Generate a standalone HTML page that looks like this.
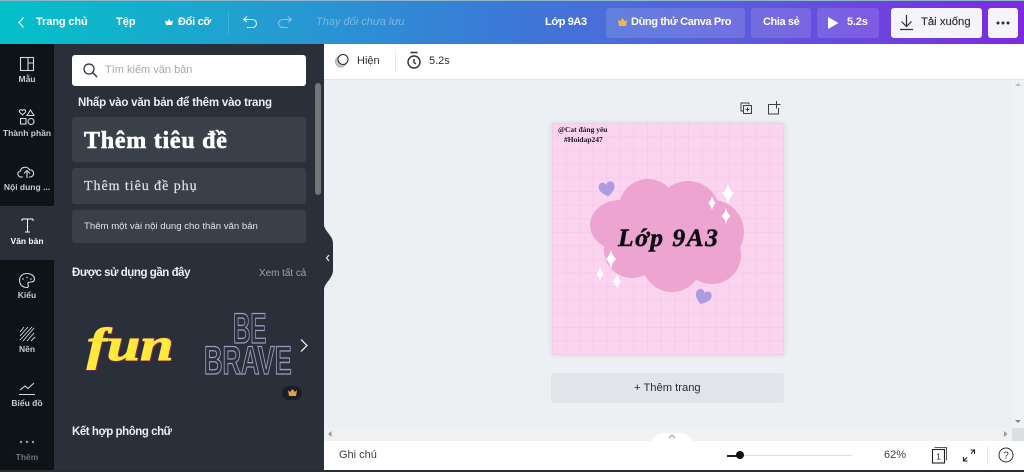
<!DOCTYPE html>
<html lang="vi"><head><meta charset="utf-8"><title>Canva</title>
<style>
*{box-sizing:border-box}
html,body{margin:0;padding:0;width:1024px;height:472px;overflow:hidden;background:#edf0f2;font-family:"Liberation Sans","Noto Sans CJK SC",sans-serif}
.a,.t{position:absolute}
.t{white-space:nowrap;line-height:14px}
svg{position:absolute;overflow:visible}
.w{color:#fff;font-weight:700;font-size:11px}
.s{font-size:8.5px;font-weight:700;color:#c9ccd0;text-align:center;width:54px;left:0;line-height:10px}
.btn{position:absolute;top:8px;height:30px;background:rgba(255,255,255,.13);border-radius:3px}
.ic{fill:none;stroke:#d5d8dc;stroke-width:1.1}
</style></head><body>
<div class="a" style="left:0;top:1px;width:1024px;height:43px;background:linear-gradient(90deg,#03c1c8 0%,#1fa3d0 22%,#3c78d8 50%,#5a5fdc 70%,#7d2ae0 100%)"></div>
<div class="a" style="left:0;top:0;width:1024px;height:1px;background:#8fb7c9"></div>
<svg style="left:0;top:0" width="300" height="44" fill="none" stroke="#fff">
<path d="M23.500 17.500l-4.500 5 4.500 5" stroke-width="1.200"/>
<path d="M247 16.500l-3.500 3 3.500 2.500M244 19.500h8c6 0 6 8 0 8h-5" stroke="#e5f3f8" stroke-width="1.100"/>
<path d="M288 16.500l3.500 3-3.500 2.500M291 19.500h-8c-6 0-6 8 0 8h5" stroke="#8fc0e6" stroke-width="1.100"/>
<path d="M165 20l2 2 2-3 2 3 2-2-1 5h-6z" fill="#fff" stroke="none"/>
<path d="M228.500 10v26" stroke="rgba(255,255,255,.14)"/>
</svg>
<div class="t w" style="left:36px;top:15px;letter-spacing:-.1px">Trang chủ</div>
<div class="t w" style="left:116px;top:15px">Tệp</div>
<div class="t w" style="left:178px;top:15px;letter-spacing:-.3px">Đổi cỡ</div>
<div class="t" style="left:316px;top:15px;font-size:11px;font-style:italic;color:#7eb6dc">Thay đổi chưa lưu</div>
<div class="t w" style="left:545px;top:15px;letter-spacing:-.4px">Lớp 9A3</div>
<div class="btn" style="left:606px;width:139px"></div>
<svg style="left:618px;top:18px" width="9" height="9"><path d="M0 1.500l2.200 2 2.300-3.500 2.300 3.500 2.200-2-1 6.500h-7z" fill="#f5b83d"/></svg>
<div class="t w" style="left:631px;top:15px;letter-spacing:-.38px">Dùng thử Canva Pro</div>
<div class="btn" style="left:751px;width:60px"></div>
<div class="t w" style="left:763px;top:15px;letter-spacing:-.4px">Chia sẻ</div>
<div class="btn" style="left:817px;width:62px"></div>
<svg style="left:827px;top:16px" width="12" height="14"><path d="M1 1l10.500 6L1 13z" fill="#fff"/></svg>
<div class="t w" style="left:847px;top:15px;letter-spacing:-.2px">5.2s</div>
<div class="a" style="left:891px;top:8px;width:91px;height:30px;background:#f6f4fb;border-radius:3px"></div>
<svg style="left:899px;top:15px" width="16" height="16" fill="none" stroke="#2b3038" stroke-width="1.200"><path d="M7.500 0v11M2.500 6.500l5 5 5-5M1 14.500h13"/></svg>
<div class="t" style="left:921px;top:15px;font-size:11.300px;color:#2b3038;-webkit-text-stroke:.15px #2b3038">Tải xuống</div>
<div class="a" style="left:988px;top:8px;width:30px;height:30px;background:#f6f4fb;border-radius:3px"></div>
<svg style="left:996px;top:21px" width="16" height="4" fill="#2b3038"><circle cx="2" cy="2" r="1.500"/><circle cx="7" cy="2" r="1.500"/><circle cx="12" cy="2" r="1.500"/></svg>

<div class="a" style="left:0;top:44px;width:54px;height:428px;background:#0e1318"></div>
<div class="a" style="left:54px;top:44px;width:270px;height:428px;background:#293039"></div>
<div class="a" style="left:0;top:206px;width:54px;height:54px;background:#293039"></div>
<div class="a" style="left:0;top:196px;width:54px;height:10px;background:#0e1318;border-radius:0 0 6px 0"></div>
<div class="a" style="left:0;top:260px;width:54px;height:10px;background:#0e1318;border-radius:0 6px 0 0"></div>

<svg style="left:0;top:44px" width="54" height="428" class="ic">
<rect x="20.500" y="13.500" width="13" height="13"/><path d="M28 13.500v13M28 19h5.500"/>
<path d="M20 68.500c-2-2 1-4 2.500-2 1.500-2 4.500 0 2.500 2l-2.500 2.500zM30.500 66l3.500 5.500h-7z"/><rect x="20.500" y="74.500" width="5.500" height="5.500"/><circle cx="31" cy="77.500" r="3"/>
<path d="M23 133h-2c-3.500 0-4.500-5-.5-6 .5-4.500 7-5 9-1.200 4.500-.4 6 6 1 7.200h-1.500M27 134v-7M24 129.500l3-3 3 3"/>
<path d="M27 229.500c-5 0-7.500 3-7.500 7s3.500 7 7 7c2.500 0 2-2 1.500-3-.5-2 1-2.500 3-2.500s3.500-1 3.500-3c0-3-3.500-5.500-7.500-5.500z"/>
<g stroke-width=".9"><path d="M20 288l4-5M20 292l8-9M20 296l12-13M23 297l11-13M27 297l7-8M31 297l4-4"/></g>
<path d="M20 346l5-4 3 2.500 6-5.500M19 350.500h16"/>
</svg>
<svg style="left:0;top:0" width="54" height="472">
<path d="M22 219h11M27.500 219v13M22 219v2M33 219v2M25 232h5" stroke="#fff" stroke-width="1" fill="none"/>
<g fill="#9a9ea3"><circle cx="21" cy="442" r="1.200"/><circle cx="27" cy="442" r="1.200"/><circle cx="33" cy="442" r="1.200"/></g>
<g fill="#d5d8dc"><circle cx="23" cy="279" r=".8"/><circle cx="27" cy="277.500" r=".8"/><circle cx="31" cy="279" r=".8"/></g>
</svg>
<div class="t s" style="top:74px">Mẫu</div>
<div class="t s" style="top:128px">Thành phần</div>
<div class="t s" style="top:182px">Nội dung ...</div>
<div class="t s" style="top:236px;color:#fff">Văn bản</div>
<div class="t s" style="top:290px">Kiểu</div>
<div class="t s" style="top:344px">Nền</div>
<div class="t s" style="top:398px">Biểu đồ</div>
<div class="t s" style="top:452px;color:#6e7277">Thêm</div>

<div class="a" style="left:72px;top:55px;width:234px;height:31px;background:#fff;border-radius:3px"></div>
<svg style="left:83px;top:63px" width="15" height="15" fill="none" stroke="#2b3038" stroke-width="1.300"><circle cx="6" cy="6" r="5"/><path d="M9.500 9.500l4.500 4.500"/></svg>
<div class="t" style="left:105px;top:63px;font-size:11px;color:#a5a9ae">Tìm kiếm văn bản</div>
<div class="t" style="left:78px;top:96px;font-size:11.500px;font-weight:700;color:#eceef0;letter-spacing:-.2px">Nhấp vào văn bản để thêm vào trang</div>
<div class="a" style="left:315px;top:83px;width:6px;height:112px;background:#70757a;border-radius:3px"></div>
<div class="a" style="left:72px;top:117px;width:234px;height:45px;background:#3a4049;border-radius:3px"></div>
<div class="t" style="left:84px;top:129px;font-family:'Liberation Serif','Noto Serif CJK SC',serif;font-size:24px;font-weight:700;color:#fff;line-height:24px;-webkit-text-stroke:.6px #fff;letter-spacing:.75px">Thêm tiêu đề</div>
<div class="a" style="left:72px;top:168px;width:234px;height:36px;background:#3a4049;border-radius:3px"></div>
<div class="t" style="left:84px;top:179px;font-family:'Liberation Serif','Noto Serif CJK SC',serif;font-size:14px;color:#dfe1e3;line-height:16px;letter-spacing:.95px;-webkit-text-stroke:.2px #dfe1e3">Thêm tiêu đề phụ</div>
<div class="a" style="left:72px;top:210px;width:234px;height:33px;background:#3a4049;border-radius:3px"></div>
<div class="t" style="left:84px;top:220px;font-size:9.600px;color:#e2e4e6">Thêm một vài nội dung cho thân văn bản</div>
<div class="t" style="left:72px;top:266px;font-size:11.500px;font-weight:700;color:#eceef0;letter-spacing:-.45px">Được sử dụng gần đây</div>
<div class="t" style="left:259px;top:267px;font-size:10px;color:#9ea2a7;letter-spacing:-.05px">Xem tất cả</div>
<div class="t" style="left:87px;top:322px;font-family:'Liberation Serif',serif;font-size:46px;font-weight:700;font-style:italic;color:#ffe93d;line-height:46px;transform:scaleX(1.3);transform-origin:0 0;-webkit-text-stroke:1px #ffe93d;text-shadow:1.200px 1.200px 0 #8c2a55,-.8px 0 0 #8c2a55,0 -1px 0 #8c2a55,1px -1px 0 #8c2a55,-.8px 1px 0 #8c2a55">fun</div>
<div class="t" style="left:233px;top:308px;font-weight:700;font-size:43px;line-height:43px;color:#293039;-webkit-text-stroke:1.300px #9a9cc0;transform:scaleX(.56);transform-origin:0 0">BE</div>
<div class="t" style="left:204px;top:341px;font-weight:700;font-size:40px;line-height:40px;color:#293039;-webkit-text-stroke:1.300px #9a9cc0;transform:scaleX(.64);transform-origin:0 0">BRAVE</div>
<svg style="left:299px;top:338px" width="10" height="15" fill="none" stroke="#e8e9ea" stroke-width="1.300"><path d="M2 1.500l6 6-6 6"/></svg>
<div class="a" style="left:282px;top:386px;width:20px;height:14px;background:#1a1f26;border-radius:7px"></div>
<svg style="left:288px;top:389px" width="9" height="8"><path d="M0 1l2 2L4.500 0 7 3l2-2-1 6H1z" fill="#e2a24b"/></svg>
<div class="t" style="left:72px;top:425px;font-size:11.500px;font-weight:700;color:#eceef0;letter-spacing:-.45px">Kết hợp phông chữ</div>

<div class="a" style="left:324px;top:44px;width:700px;height:36px;background:#fff;border-bottom:1px solid #e3e6e8"></div>
<svg style="left:334px;top:52px" width="18" height="18" fill="none"><circle cx="7" cy="9.500" r="5.500" fill="#c8cbce" stroke="#a9adb1"/><circle cx="9" cy="7.500" r="5" fill="#fff" stroke="#2b3038" stroke-width="1.100"/></svg>
<div class="t" style="left:357px;top:54px;font-size:11px;color:#2b3038">Hiện</div>
<div class="a" style="left:395px;top:51px;width:1px;height:21px;background:#e6e8ea"></div>
<svg style="left:406px;top:51px" width="16" height="19" fill="none" stroke="#2b3038" stroke-width="1.400"><circle cx="8" cy="11" r="6"/><path d="M4.500 1.500h7M8 8v3.500l2 1.500"/></svg>
<div class="t" style="left:429px;top:54px;font-size:11px;color:#2b3038">5.2s</div>

<div class="a" style="left:1012px;top:80px;width:12px;height:350px;background:#eff1f2"></div>
<svg style="left:1014px;top:82px" width="8" height="6"><path d="M1 4l3-3 3 3z" fill="#b9bcbe"/></svg>
<svg style="left:1014px;top:419px" width="8" height="6"><path d="M1 1l3 3 3-3z" fill="#85888b"/></svg>
<div class="a" style="left:324px;top:428px;width:700px;height:13px;background:#eff1f2"></div>
<svg style="left:327px;top:430px" width="6" height="8"><path d="M4.500 1L1 4l3.500 3z" fill="#9a9da0"/></svg>
<svg style="left:1003px;top:430px" width="6" height="8"><path d="M1 1l3.500 3L1 7z" fill="#9a9da0"/></svg>
<div class="a" style="left:1012px;top:428px;width:12px;height:13px;background:#dcdfe1"></div>

<svg style="left:740px;top:101px" width="42" height="16" fill="none" stroke="#3b4046" stroke-width="1"><path d="M3 10H1V2h8v1.500"/><rect x="3.500" y="4.500" width="8" height="8"/><path d="M7.500 6.500v4M5.500 8.500h4"/><path d="M35 3.500h-6.500v9.500h10V7M36.500 0v7.500M33 3.500h7.500"/></svg>

<div class="a" style="left:552px;top:123px;width:232px;height:232px;background-color:#fbd4ef;background-image:linear-gradient(rgba(232,170,222,.2) 1px,transparent 1px),linear-gradient(90deg,rgba(232,170,222,.2) 1px,transparent 1px);background-size:13.600px 13.600px;box-shadow:0 0 5px rgba(60,60,80,.12)"></div>
<div class="t" style="left:558px;top:125px;font-family:'Liberation Serif','Noto Serif CJK SC',serif;font-size:7.500px;font-weight:700;line-height:10px;color:#1b1524">@Cat đáng yêu<br><span style="margin-left:6px">#Hoidap247</span></div>
<svg style="left:0;top:0" width="1024" height="472">
<g fill="#eea4d0">
<circle cx="648" cy="208" r="29"/><circle cx="688" cy="213" r="32"/>
<ellipse cx="620" cy="225" rx="30" ry="25"/><circle cx="712" cy="232" r="32"/>
<circle cx="632" cy="250" r="28"/><circle cx="672" cy="262" r="30"/><circle cx="712" cy="255" r="29"/>
<rect x="625" y="210" width="90" height="55"/>
</g>
<path fill="#ae9ce0" transform="translate(607 189) rotate(-10)" d="M0 7.500C-3 5.500-8 2-8-2c0-3 2-5 4.200-5C-2-7-.8-6 0-4.500.8-6 2-7 4.200-7 6.500-7 8-5 8-2c0 4-5 7.500-8 9.500z"/>
<path fill="#ae9ce0" transform="translate(703 297) rotate(20)" d="M0 7.500C-3 5.500-8 2-8-2c0-3 2-5 4.200-5C-2-7-.8-6 0-4.500.8-6 2-7 4.200-7 6.500-7 8-5 8-2c0 4-5 7.500-8 9.500z"/>
<g fill="#fff">
<path d="M728 184q1.500 6 6 9.500q-4.500 3.500-6 10q-1.500-6.500-6-10q4.500-3.500 6-9.500z"/>
<path d="M712 196q1 4 3.500 7q-2.500 3-3.500 7q-1-4-3.500-7q2.500-3 3.500-7z"/>
<path d="M726 208q1 5 4.500 8q-3.500 3-4.500 8q-1-5-4.500-8q3.500-3 4.500-8z"/>
<path d="M611 250q1 5 5 9q-4 4-5 10q-1-6-5-10q4-4 5-9z"/>
<path d="M600 267q1 4 3.500 7q-2.500 3-3.500 7q-1-4-3.500-7q2.500-3 3.500-7z"/>
<path d="M617 274q1 4 4 7.500q-3 3.500-4 7.500q-1-4-4-7.500q3-3.500 4-7.500z"/>
</g>
</svg>
<div class="t" style="left:618px;top:224px;font-family:'Liberation Serif','Noto Serif CJK SC',serif;font-size:25.500px;font-weight:700;font-style:italic;line-height:28px;color:#0d0a12;letter-spacing:1.500px;-webkit-text-stroke:.5px #0d0a12">Lớp 9A3</div>

<div class="a" style="left:551px;top:373px;width:233px;height:30px;background:#e1e4e8;border-radius:3px"></div>
<div class="t" style="left:634px;top:381px;font-size:11.200px;color:#2b3038">+ Thêm trang</div>

<div class="a" style="left:324px;top:441px;width:700px;height:29px;background:#fff"></div>
<div class="a" style="left:0;top:470px;width:1024px;height:2px;background:#2a2c30"></div>
<svg style="left:647px;top:431px" width="66" height="11"><path d="M0 11c7 0 7-9 15-9h20c8 0 8 9 15 9z" fill="#fff"/><path d="M30 7l3-3 3 3" transform="translate(-8 0)" fill="none" stroke="#9a9da0"/></svg>
<div class="t" style="left:339px;top:448px;font-size:11px;color:#3b4046">Ghi chú</div>
<div class="a" style="left:727px;top:455px;width:10px;height:1.500px;background:#1e2227"></div>
<div class="a" style="left:740px;top:455px;width:112px;height:1px;background:#dcdfe1"></div>
<div class="a" style="left:736px;top:451px;width:8px;height:8px;background:#0e1318;border-radius:50%"></div>
<div class="t" style="left:884px;top:448px;font-size:11px;color:#3b4046">62%</div>
<svg style="left:930px;top:445px" width="20" height="20" fill="none" stroke="#1e2227"><path d="M4.500 2.500h12v13" stroke="#555a60"/><rect x="2.500" y="4.500" width="12" height="13.500" stroke-width="1.100"/><text x="8.500" y="14.500" font-size="8.500" fill="#1e2227" stroke="none" text-anchor="middle" font-family="Liberation Sans">1</text></svg>
<svg style="left:962px;top:449px" width="14" height="14" fill="none" stroke="#1e2227" stroke-width="1.100"><path d="M9 4.500L12.500 1M8.500 1h4v4M5 8.500L1.500 12M1.500 8v4h4"/></svg>
<div class="a" style="left:987px;top:446px;width:1px;height:19px;background:#e6e8ea"></div>
<svg style="left:998px;top:447px" width="16" height="16" fill="none" stroke="#2b3038"><circle cx="8" cy="8" r="7"/><text x="8" y="11.500" font-size="10" fill="#2b3038" stroke="none" text-anchor="middle" font-family="Liberation Sans">?</text></svg>

<svg style="left:322px;top:224px" width="12" height="68"><path d="M2 0v66c0-4 2-6 5-10 2-3 4-6 4-10V20c0-5-2-7-4-10C4 6 2 4 2 0z" fill="#293039"/><path d="M7 31l-2.500 3L7 37" fill="none" stroke="#e6e7e9" stroke-width="1.200"/></svg>
</body></html>
